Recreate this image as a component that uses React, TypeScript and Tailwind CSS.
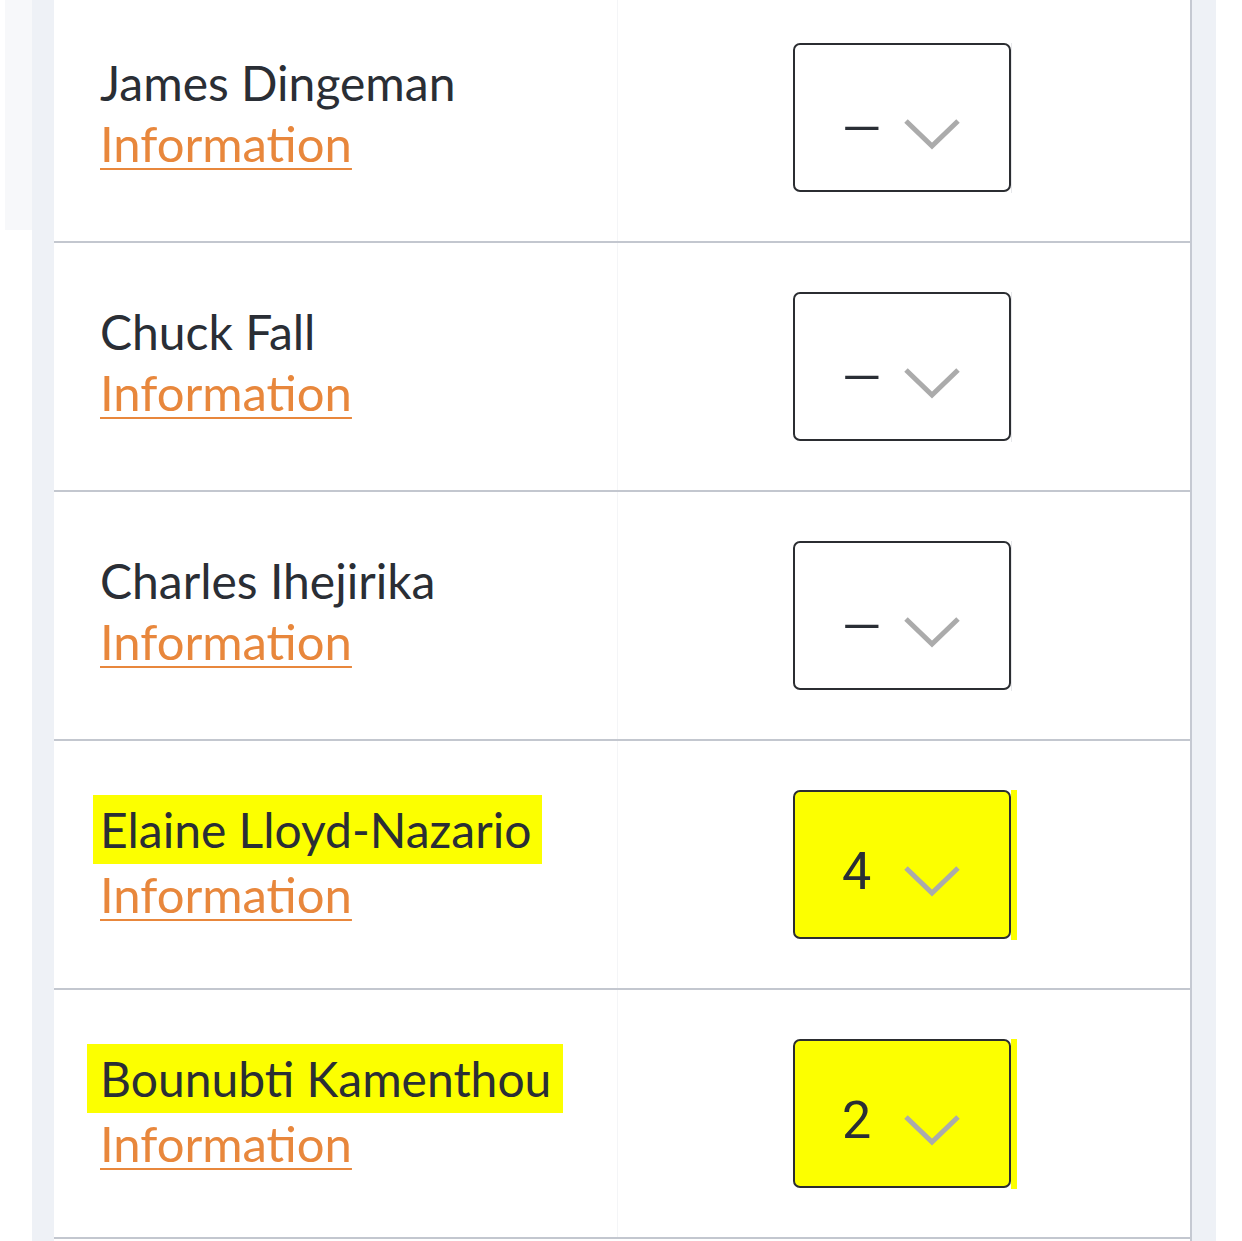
import React from "react";

type Row = {
  name: string;
  value: string;
  hl: boolean;
  hlCls?: string;
};

const rows: Row[] = [
  { name: "James Dingeman", value: "—", hl: false },
  { name: "Chuck Fall", value: "—", hl: false },
  { name: "Charles Ihejirika", value: "—", hl: false },
  { name: "Elaine Lloyd-Nazario", value: "4", hl: true, hlCls: "pl-[7px] -ml-[7px] pr-[11px]" },
  { name: "Bounubti Kamenthou", value: "2", hl: true, hlCls: "pl-[13px] -ml-[13px] pr-[12px]" },
];

function Chevron() {
  return (
    <svg width="58" height="50" viewBox="0 0 58 50" className="shrink-0">
      <polyline points="3,21 29,46 55,21" fill="none" stroke="#ababab" strokeWidth="5" />
    </svg>
  );
}

function RowView({ r }: { r: Row }) {
  return (
    <div className="flex h-[249px] shrink-0 border-b-2 border-[#c3c7cf]">
      <div className="w-[564px] border-r border-[#f4f5f7] pl-[46px] pb-[10px] flex flex-col justify-center font-['Lato',sans-serif]">
        <div className="text-[48px] leading-[60px] text-[#2a2e35]">
          {r.hl ? (
            <span className={`inline-block bg-[#fcff00] pt-[5px] pb-[4px] ${r.hlCls}`}>{r.name}</span>
          ) : (
            r.name
          )}
        </div>
        <div className="text-[49px] leading-[60px]">
          <a className="text-[#e8873c] underline decoration-2 underline-offset-[6px]">Information</a>
        </div>
      </div>
      <div className="flex-1 flex items-center pl-[175px]">
        <div
          className={`w-[218px] h-[149px] border-2 border-[#2b2d31] rounded-[7px] flex items-center pl-[47px] pt-[14px] ${
            r.hl ? "bg-[#fcff00]" : "bg-white"
          }`}
        >
          <span
            className={`w-[61px] text-[#2a2e35] ${
              r.hl ? "font-['Roboto',sans-serif] text-[52px]" : "font-['Lato',sans-serif] text-[50px]"
            }`}
          >
            {r.value}
          </span>
          <Chevron />
        </div>
        <div className={`w-[6px] h-[150px] ${r.hl ? "bg-[#fcff00]" : "border-l border-[#e6e7ea]"}`} />
      </div>
    </div>
  );
}

export default function App() {
  return (
    <div className="flex w-[1242px] h-[1241px] overflow-hidden bg-white">
      <div className="w-[32px] shrink-0">
        <div className="ml-[5px] h-[230px] bg-[#f7f8fa]" />
      </div>
      <div className="w-[22px] shrink-0 bg-[#eef1f6]" />
      <div className="w-[1138px] shrink-0 border-r-2 border-[#c5c9d2] flex flex-col -mt-[6px]">
        {rows.map((r) => (
          <RowView key={r.name} r={r} />
        ))}
      </div>
      <div className="w-[24px] shrink-0 bg-[#eef1f6]" />
      <div className="flex-1 bg-white" />
    </div>
  );
}
